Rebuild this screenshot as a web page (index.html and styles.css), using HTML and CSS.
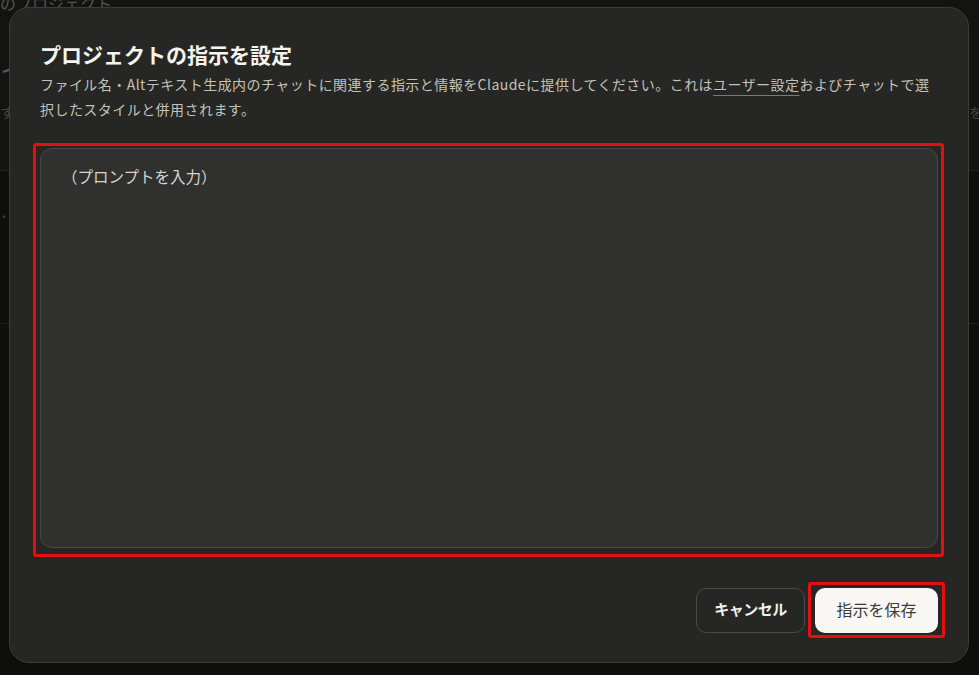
FILE: index.html
```html
<!DOCTYPE html>
<html lang="ja">
<head>
<meta charset="utf-8">
<title>プロジェクトの指示を設定</title>
<link rel="stylesheet" href="styles.css">
</head>
<body>
<div class="page">
  <div class="bg-header">
    <div class="bg-top">のプロジェクト</div>
    <div class="bg-head">イ</div>
    <div class="bg-row"><span>す</span><span>を</span></div>
  </div>
  <div class="bg-dot">・</div>
  <div class="bg-rule"></div>
</div>

<div class="modal">
  <h1 class="title">プロジェクトの指示を設定</h1>
  <p class="desc">ファイル名・Altテキスト生成内のチャットに関連する指示と情報をClaudeに提供してください。これは<span class="link">ユーザー設定</span>およびチャットで選択したスタイルと併用されます。</p>
  <div class="field marked">
    <div class="textarea">（プロンプトを入力）</div>
  </div>
  <div class="actions">
    <button class="btn cancel">キャンセル</button>
    <button class="btn save marked">指示を保存</button>
  </div>
</div>
</body>
</html>
```

FILE: styles.css
```css
html, body {
  margin: 0;
  padding: 0;
  height: 100%;
  background: #0e0e0d;
  overflow: hidden;
  font-family: "Noto Sans CJK JP", "Noto Sans", sans-serif;
}

.page {
  height: 100%;
  display: flex;
  flex-direction: column;
  color: #4a4945;
}

.bg-header {
  height: 171px;
  box-sizing: border-box;
  background: #131312;
  border-bottom: 1px solid #1f1f1d;
  display: flex;
  flex-direction: column;
}

.bg-top {
  font-size: 16px;
  line-height: 16px;
  margin-top: -5px;
  color: #55544f;
  white-space: nowrap;
}

.bg-head {
  font-size: 28px;
  line-height: 36px;
  margin-top: 40px;
  color: #56554f;
}

.bg-row {
  display: flex;
  justify-content: space-between;
  font-size: 14px;
  line-height: 20px;
  margin-top: 15px;
  margin-right: -4px;
  color: #46453f;
}

.bg-dot {
  font-size: 12px;
  line-height: 12px;
  margin-top: 40px;
  margin-left: -2px;
  color: #3c3b37;
}

.bg-rule {
  height: 1px;
  background: #1e1e1c;
  margin-top: 100px;
}

.modal {
  position: absolute;
  left: 9px;
  top: 7px;
  width: 960px;
  height: 656px;
  box-sizing: border-box;
  border: 1px solid #3b3b38;
  border-radius: 20px;
  background: #262624;
  padding: 32px 30px 30px 30px;
  display: flex;
  flex-direction: column;
}

.title {
  margin: 0;
  font-size: 21px;
  line-height: 28px;
  font-weight: 700;
  color: #f5f4ef;
}

.desc {
  margin: 4px 0 0 0;
  font-size: 14px;
  line-height: 25px;
  color: #c3c2b9;
  letter-spacing: 0.45px;
}

.link {
  text-decoration: underline;
  text-decoration-color: #7a7974;
  text-decoration-thickness: 1px;
  text-underline-offset: 5px;
}

.field {
  margin-top: 26px;
  position: relative;
}

.textarea {
  height: 400px;
  box-sizing: border-box;
  background: #30302e;
  border: 1px solid #474744;
  border-radius: 12px;
  padding: 15px 21px;
  font-size: 15.5px;
  line-height: 24px;
  color: #d6d5cf;
}

.actions {
  margin-top: 40px;
  display: flex;
  justify-content: flex-end;
  gap: 10px;
}

.btn {
  height: 45px;
  border-radius: 10px;
  font-family: inherit;
  font-size: 15px;
  line-height: 20px;
  padding: 0 0 3px 0;
  position: relative;
  cursor: pointer;
}

.cancel {
  width: 109px;
  background: transparent;
  border: 1px solid #4c4b47;
  color: #f2f1ec;
  font-weight: 700;
  letter-spacing: -0.5px;
}

.save {
  width: 123px;
  background: #f8f7f3;
  border: none;
  color: #3d3d3a;
  font-weight: 400;
  font-size: 16px;
}

.marked::after {
  content: "";
  position: absolute;
  border: 3px solid #e3100f;
  border-radius: 3px;
  box-shadow: 0 0 1px #7a0808;
  pointer-events: none;
}

.field.marked::after {
  left: -7px;
  right: -6px;
  top: -5px;
  bottom: -9px;
}

.save.marked::after {
  left: -7px;
  right: -7px;
  top: -6px;
  bottom: -5px;
}
```
